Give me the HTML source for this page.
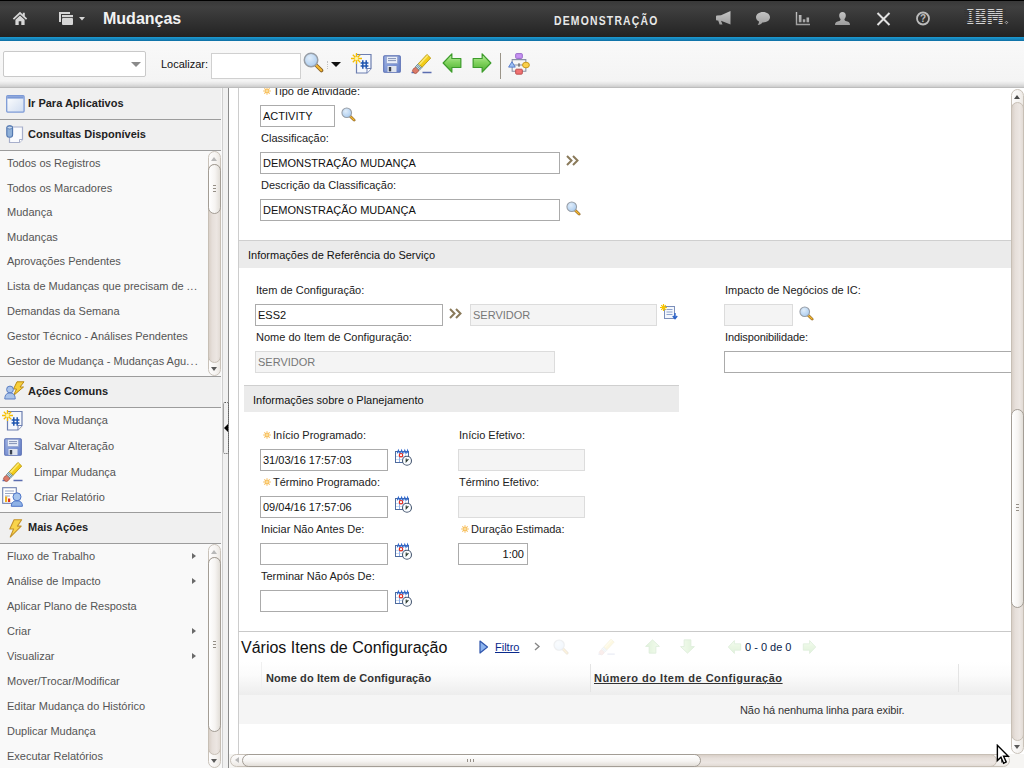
<!DOCTYPE html>
<html lang="pt-BR">
<head>
<meta charset="utf-8">
<title>Mudanças</title>
<style>
*{box-sizing:border-box;margin:0;padding:0}
html,body{width:1024px;height:768px;overflow:hidden;background:#fff;font-family:"Liberation Sans",Arial,sans-serif;font-size:11px;color:#222}
.abs{position:absolute}
#hdr{position:absolute;left:0;top:0;width:1024px;height:37px;background:linear-gradient(#000 0,#000 1px,#393939 1.5px,#404040 7px,#333 20px,#272727 33px,#222 37px);}
#blue{position:absolute;left:0;top:37px;width:1024px;height:4px;background:linear-gradient(#1c9ad0,#1583ba 60%,#0e6ea3)}
#tb{position:absolute;left:0;top:41px;width:1024px;height:47px;background:linear-gradient(#f9f9f9 0,#f4f4f4 40px,#e4e4e4 43px,#cbcbcb 46.3px,#999 47px)}
#title{position:absolute;left:103px;top:10px;font-size:16px;font-weight:bold;color:#f2f2f2;letter-spacing:0}
#demo{position:absolute;left:554px;top:13px;font-size:13px;font-weight:bold;color:#e8e8e8;letter-spacing:1.5px;transform:scaleX(.8);transform-origin:0 0}
#left{position:absolute;left:0;top:88px;width:222px;height:680px;background:#f9f9f9;overflow:hidden}
.sh{position:absolute;left:0;width:221px;background:#f0f0f0;border-top:1px solid #9c9c9c;border-bottom:1px solid #9c9c9c;font-weight:bold;font-size:11px;color:#222}
.sh span{position:absolute;left:28px;top:8px}
.li{position:absolute;left:7px;font-size:11px;color:#555;white-space:nowrap}
.ai{position:absolute;left:34px;font-size:11px;color:#555;white-space:nowrap}
.arr{position:absolute;left:192px;width:0;height:0;border-left:4.5px solid #6a6a6a;border-top:3.5px solid transparent;border-bottom:3.5px solid transparent}
.vsb{position:absolute;width:13px;background:linear-gradient(90deg,#d9d2c8,#efebe5 50%,#d9d2c8);border:1px solid #c5beb4;border-radius:6px}
.thumb{position:absolute;background:linear-gradient(90deg,#fff,#f6f4f2 55%,#e2ded8);border:1px solid #a39d95;border-radius:7px}
#main{overflow:hidden;position:absolute;left:229px;top:88px;width:795px;height:680px;background:#fff}
.lbl{position:absolute;font-size:11px;color:#222;white-space:nowrap}
.inp{position:absolute;height:22px;border:1px solid #ababab;background:#fff;font-size:11px;color:#111;line-height:20px;padding-left:2px;white-space:nowrap;overflow:hidden}
.ro{border-color:#dcdcdc;background:#f4f4f4;color:#777}
.sec{position:absolute;background:#ebebeb;border-top:1px solid #cfcfcf;font-size:11px;color:#111}
</style>
</head>
<body>
<div id="hdr"></div>
<div id="blue"></div>
<div id="title">Mudanças</div>
<div id="demo">DEMONSTRAÇÃO</div>
<svg class="abs" style="left:0;top:0" width="1024" height="37" viewBox="0 0 1024 37">
 <g fill="#d6d6d6">
  <!-- home -->
  <path d="M20 11.8 L12.8 18.6 L14 19.8 L20 14.2 L26 19.8 L27.2 18.6 L24.8 16.3 V12.8 H22.8 V14.4 Z"/><path d="M20 15.6 L15.4 19.8 V25 H18.7 V21.2 H21.3 V25 H24.6 V19.8 Z"/>
  <!-- windows -->
  <rect x="59" y="12" width="11" height="2"/>
  <rect x="59" y="14" width="2" height="8"/>
  <rect x="62" y="15" width="11" height="2.2"/>
  <rect x="62" y="18" width="11" height="7" rx="1"/>
  <path d="M79 17 H85 L82 20.5 Z"/>
 </g>
 <defs><linearGradient id="hg" x1="0" y1="11" x2="0" y2="26" gradientUnits="userSpaceOnUse"><stop offset="0" stop-color="#c6c6c6"/><stop offset="1" stop-color="#9a9a9a"/></linearGradient></defs>
 <g fill="url(#hg)">
  <!-- megaphone -->
  <path d="M730.5 11 V24.5 L721 20.8 L722.5 24.6 H719.6 L718.2 20.6 H717 Q716 20.6 716 19.6 V16.6 Q716 15.6 717 15.6 L721 15.3 Z"/>
  <!-- chat -->
  <path d="M763 12 C759 12 756 14.3 756 17.2 C756 19 757.2 20.6 759 21.5 C759 22.8 758.5 24 757.6 25 C759.8 24.8 761.5 23.8 762.4 22.4 C762.6 22.4 762.8 22.4 763 22.4 C767 22.4 770 20.1 770 17.2 C770 14.3 767 12 763 12 Z"/>
  <!-- chart -->
  <path d="M795.8 12 H797.2 V23.8 H810 V25.2 H795.8 Z"/>
  <rect x="798.8" y="15" width="2.7" height="7.3"/>
  <rect x="802.8" y="19.3" width="2.5" height="3"/>
  <rect x="806.5" y="17.5" width="2.6" height="4.8"/>
  <!-- person -->
  <path d="M842.5 12 C844.6 12 845.8 13.5 845.8 15.4 C845.8 17 845.2 18.2 844.4 19 C844.4 20.2 845 20.8 846.6 21.3 C849 22 850 22.8 850 25 H835 C835 22.8 836 22 838.4 21.3 C840 20.8 840.6 20.2 840.6 19 C839.8 18.2 839.2 17 839.2 15.4 C839.2 13.5 840.4 12 842.5 12 Z"/>
 </g>
 <!-- X -->
 <path d="M877.5 13 L889.5 25 M889.5 13 L877.5 25" stroke="#e2e2e2" stroke-width="2" fill="none"/>
 <!-- help -->
 <circle cx="923" cy="18.5" r="6" fill="none" stroke="#bcbcbc" stroke-width="1.8"/>
 <text x="923" y="22.3" font-family="Liberation Sans, sans-serif" font-size="10" font-weight="bold" fill="#bcbcbc" text-anchor="middle">?</text>
 <!-- IBM logo -->
 <g fill="#d2d2d2" font-family="Liberation Mono, monospace" font-weight="bold">
  <text y="24.6" font-size="27" stroke="#d2d2d2" stroke-width=".7"><tspan x="966.6" textLength="7.6" lengthAdjust="spacingAndGlyphs">I</tspan><tspan x="975" textLength="11" lengthAdjust="spacingAndGlyphs">B</tspan><tspan x="987" textLength="16.4" lengthAdjust="spacingAndGlyphs">M</tspan></text>
 </g>
 <g fill="#353535">
  <rect x="964" y="10" width="42" height="1"/><rect x="964" y="12" width="42" height="1"/><rect x="964" y="14" width="42" height="1"/><rect x="964" y="16" width="42" height="1"/><rect x="964" y="18" width="42" height="1"/><rect x="964" y="20" width="42" height="1"/><rect x="964" y="22" width="42" height="1"/><rect x="964" y="24" width="42" height="2" fill="#2d2d2d"/><rect x="964" y="6" width="42" height="3" fill="#3e3e3e"/>
 </g>
 <rect x="1005.6" y="21.6" width="1.8" height="1.8" fill="none" stroke="#d0d0d0" stroke-width=".7" transform="rotate(45 1006.5 22.5)"/>
</svg>
<svg width="0" height="0" style="position:absolute">
 <defs>
  <radialGradient id="lens" cx="40%" cy="35%" r="70%"><stop offset="0" stop-color="#e0edfa"/><stop offset="1" stop-color="#a9cbef"/></radialGradient>
  <linearGradient id="grn" x1="0" y1="0" x2="0" y2="1"><stop offset="0" stop-color="#c4eeae"/><stop offset=".45" stop-color="#84d460"/><stop offset="1" stop-color="#4cae2e"/></linearGradient>
  <linearGradient id="flop" x1="0" y1="0" x2="1" y2="1"><stop offset="0" stop-color="#9db2e4"/><stop offset="1" stop-color="#6580c8"/></linearGradient>
  <g id="mag">
   <path d="M10.2 10.2 L14.2 14.2" stroke="#8c6428" stroke-width="2.9" stroke-linecap="round"/>
   <path d="M10.2 10.2 L14.1 14.1" stroke="#f5b82e" stroke-width="1.5" stroke-linecap="round"/>
   <circle cx="6.2" cy="6.2" r="5.2" fill="url(#lens)" stroke="#989ea6" stroke-width="1.15"/>
  </g>
  <g id="cal">
   <rect x="1.5" y="3.5" width="13" height="11" fill="#fff" stroke="#4f6c9f" stroke-width="1"/>
   <path d="M2 8.5 H14 M2 11.5 H14 M5.5 4 V14 M8.5 4 V14 M11.5 4 V14" stroke="#c9dcf6" stroke-width="1"/>
   <path d="M5.5 7 V14" stroke="#8fb0ea" stroke-width="1"/>
   <path d="M3.2 5.4 L4.4 2.2 L5.6 5.4 M6.4 5.4 L7.6 2.2 L8.8 5.4 M9.6 5.4 L10.8 2.2 L12 5.4 M12.6 5.4 L13.6 2.4 L14.2 4.6" fill="none" stroke="#2d66cc" stroke-width="1.1"/>
   <circle cx="7" cy="7.2" r="1.7" fill="#fff" stroke="#e02a1e" stroke-width="1.2"/>
   <circle cx="13" cy="12.7" r="4.5" fill="#fbfdff" stroke="#4a5b74" stroke-width="1.1"/>
   <path d="M12.2 10.4 V13.6 L14.4 11.2" stroke="#2b3a2e" stroke-width="1.1" fill="none"/>
  </g>
  <g id="chev">
   <path d="M1 1 L5.5 5.5 L1 10 M7 1 L11.5 5.5 L7 10" fill="none" stroke="#8a7a5a" stroke-width="2"/>
  </g>
  <g id="newdoc">
   <path d="M5.5 1.5 H20 V15.5 L16 20 H5.5 Z" fill="#f5f8fd" stroke="#6d7fb0" stroke-width="1.2"/>
   <path d="M20 15.5 H16 V20" fill="#fff" stroke="#6d7fb0" stroke-width="1"/>
   <path d="M11.8 7.2 V15.8 M15.2 7.2 V15.8 M9.6 9.9 H17.4 M9.6 13.1 H17.4" stroke="#1f55b0" stroke-width="1.5"/>
   <path d="M5.5 0 V11 M0 5.5 H11 M1.8 1.8 L9.2 9.2 M9.2 1.8 L1.8 9.2" stroke="#f5bd00" stroke-width="1.3"/>
   <circle cx="5.5" cy="5.5" r="1.8" fill="#fff5a0"/>
  </g>
  <g id="save">
   <rect x=".7" y=".7" width="16.6" height="16.6" rx="1" fill="url(#flop)" stroke="#5b70b4" stroke-width="1.1"/>
   <rect x="3.5" y="1.5" width="11" height="7" fill="#e9eef8" stroke="#8b9bc6" stroke-width=".6"/>
   <path d="M5 3.6 H13 M5 5.6 H13" stroke="#8391b6" stroke-width="1"/>
   <rect x="4.5" y="11" width="9" height="6" fill="#dfe4ee"/>
   <rect x="5.8" y="12" width="2.4" height="4.4" fill="#39414f"/>
  </g>
  <g id="eraser">
   <path d="M.5 19.6 H3.6 M11.5 19.6 H20.5" stroke="#5b6db0" stroke-width="1.5"/>
   <g transform="rotate(-47 5 17)">
    <rect x="1.5" y="14.4" width="6" height="5.2" rx="2.2" fill="#dc7a68" stroke="#a6503f" stroke-width=".8"/>
    <rect x="7" y="14.4" width="4.2" height="5.2" fill="#e4edf0" stroke="#5f8088" stroke-width=".8"/>
    <path d="M8.4 14.6 V19.4 M9.8 14.6 V19.4" stroke="#2f6f86" stroke-width=".7"/>
    <rect x="11.2" y="14.4" width="12.6" height="5.2" fill="#f2cc18" stroke="#b5940c" stroke-width=".8"/>
    <rect x="11.4" y="14.9" width="12.2" height="1.7" fill="#fbe870"/>
   </g>
  </g>
  <g id="larr"><path d="M.8 10 L9.5 .8 V5.5 H18.5 V14.5 H9.5 V19.2 Z" fill="url(#grn)" stroke="#3c9c2a" stroke-width="1.2" stroke-linejoin="round"/></g>
  <g id="flow">
   <path d="M10.6 5 V6.4 M4 6.4 H17.2 V17.6 H4 Z M4 11.6 H17.2" fill="none" stroke="#8890a4" stroke-width="1"/>
   <rect x="7.4" y=".6" width="6.4" height="4.6" rx=".8" fill="#c792f2" stroke="#9466c6" stroke-width=".9"/>
   <path d="M3.8 8.4 L.6 13.6 H7 Z" fill="#9cc0f5" stroke="#5478c8" stroke-width=".9"/>
   <ellipse cx="17.3" cy="11.6" rx="3.3" ry="2.7" fill="#fbd04a" stroke="#c49418" stroke-width=".9"/>
   <rect x="7.4" y="15.6" width="6.4" height="4.8" rx=".8" fill="#f07272" stroke="#b84a4a" stroke-width=".9"/>
   <path d="M10.6 9.9 V13.3" stroke="#444" stroke-width="1"/>
  </g>
 </defs>
</svg>
<div id="tb">
 <div class="abs" style="left:3px;top:10px;width:143px;height:26px;background:#fff;border:1px solid #c9c9c9;border-radius:2px"></div>
 <div class="abs" style="left:131px;top:21px;width:0;height:0;border-top:5px solid #8a8a8a;border-left:5px solid transparent;border-right:5px solid transparent"></div>
 <div class="abs" style="left:161px;top:17px;font-size:11px;color:#111">Localizar:</div>
 <div class="abs" style="left:211px;top:12px;width:90px;height:26px;background:#fff;border:1px solid #d0d0d0"></div>
 <svg class="abs" style="left:303px;top:11.4px" width="21" height="21" viewBox="0 0 16.2 16.2"><use href="#mag"/></svg>
 <div class="abs" style="left:327px;top:20px;width:1px;height:8px;border-left:1px dotted #c4c4c4"></div>
 <div class="abs" style="left:331px;top:21px;width:0;height:0;border-top:5px solid #111;border-left:5px solid transparent;border-right:5px solid transparent"></div>
 <svg class="abs" style="left:351px;top:12px" width="21" height="21" viewBox="0 0 21 21"><use href="#newdoc"/></svg>
 <svg class="abs" style="left:383px;top:14px" width="18" height="18" viewBox="0 0 18 18"><use href="#save"/></svg>
 <svg class="abs" style="left:411px;top:12px" width="22" height="22" viewBox="0 0 22 22"><use href="#eraser"/></svg>
 <svg class="abs" style="left:442px;top:12px" width="20" height="20" viewBox="0 0 19.3 20"><use href="#larr"/></svg>
 <svg class="abs" style="left:472px;top:12px" width="20" height="20" viewBox="0 0 19.3 20"><use href="#larr" transform="translate(19.3 0) scale(-1 1)"/></svg>
 <div class="abs" style="left:500px;top:12px;width:1px;height:26px;background:#9a9488"></div>
 <svg class="abs" style="left:508px;top:12px" width="22" height="22" viewBox="0 0 21.2 21.2"><use href="#flow"/></svg>
</div>


<div id="left">
<div class="sh" style="top:-1px;height:33px"><svg class="abs" style="left:6px;top:7px" width="19" height="18" viewBox="0 0 19 18"><defs><linearGradient id="wg" x1="0" y1="0" x2="1" y2="1"><stop offset="0" stop-color="#fff"/><stop offset="1" stop-color="#cfdcf0"/></linearGradient></defs><rect x=".7" y=".7" width="17.4" height="16.4" rx="1" fill="url(#wg)" stroke="#7d9ad6" stroke-width="1.3"/><rect x="1.2" y="1.2" width="16.4" height="2.4" fill="#7d9ad6"/></svg><span style="top:9px">Ir Para Aplicativos</span></div>
<div class="sh" style="top:31px;height:32px"><svg class="abs" style="left:6px;top:5px" width="18" height="19" viewBox="0 0 18 19"><path d="M4.5 2 H16.5 V14.5 L13.5 17.5 H3.5 V13" fill="#fafbfe" stroke="#a7afcb" stroke-width="1.2"/><path d="M16.5 14.5 H13.5 V17.5" fill="#fff" stroke="#a7afcb" stroke-width="1"/><rect x=".8" y=".8" width="5.8" height="11.4" rx="2.4" fill="#8fb0d8" stroke="#4f74ae" stroke-width="1.1"/><ellipse cx="3.7" cy="2.6" rx="2.6" ry="1.4" fill="#c7d9ef" stroke="#4f74ae" stroke-width=".7"/></svg><span style="top:8px">Consultas Disponíveis</span></div>
<div class="sh" style="top:288px;height:32px"><svg class="abs" style="left:4px;top:4px" width="21" height="19" viewBox="0 0 21 19"><path d="M13 .8 H20 L16 6 H19.5 L9.5 14.5 L12.5 8 H9.5 Z" fill="#f8cf3a" stroke="#b98a14" stroke-width="1"/><circle cx="6" cy="8.5" r="3.4" fill="#a9c3ea" stroke="#5c7fc3" stroke-width="1"/><path d="M.8 18 C.8 13.5 3 12 6 12 C9 12 11.2 13.5 11.2 18 Z" fill="#a9c3ea" stroke="#5c7fc3" stroke-width="1"/></svg><span style="top:8px">Ações Comuns</span></div>
<div class="sh" style="top:424px;height:32px"><svg class="abs" style="left:8px;top:6px" width="15" height="19" viewBox="0 0 15 20"><path d="M6 .8 H14 L9.5 7.5 H13.5 L2 19 L5.5 10.5 H1.5 Z" fill="#f9d44a" stroke="#c4922a" stroke-width="1.1" stroke-linejoin="round"/></svg><span style="top:8px">Mais Ações</span></div>
<div class="li" style="top:69px">Todos os Registros</div>
<div class="li" style="top:94px">Todos os Marcadores</div>
<div class="li" style="top:118px">Mudança</div>
<div class="li" style="top:143px">Mudanças</div>
<div class="li" style="top:167px">Aprovações Pendentes</div>
<div class="li" style="top:192px">Lista de Mudanças que precisam de <span style="letter-spacing:.5px">...</span></div>
<div class="li" style="top:217px">Demandas da Semana</div>
<div class="li" style="top:242px">Gestor Técnico - Análises Pendentes</div>
<div class="li" style="top:267px">Gestor de Mudança - Mudanças Agu<span style="letter-spacing:1.2px">...</span></div>
<div class="ai" style="top:326px">Nova Mudança</div>
<div class="ai" style="top:352px">Salvar Alteração</div>
<div class="ai" style="top:378px">Limpar Mudança</div>
<div class="ai" style="top:403px">Criar Relatório</div>
<div class="li" style="top:462px">Fluxo de Trabalho</div>
<div class="arr" style="top:465px"></div>
<div class="li" style="top:487px">Análise de Impacto</div>
<div class="arr" style="top:490px"></div>
<div class="li" style="top:512px">Aplicar Plano de Resposta</div>
<div class="li" style="top:537px">Criar</div>
<div class="arr" style="top:540px"></div>
<div class="li" style="top:562px">Visualizar</div>
<div class="arr" style="top:565px"></div>
<div class="li" style="top:587px">Mover/Trocar/Modificar</div>
<div class="li" style="top:612px">Editar Mudança do Histórico</div>
<div class="li" style="top:637px">Duplicar Mudança</div>
<div class="li" style="top:662px">Executar Relatórios</div>
<svg class="abs" style="left:2px;top:322px" width="21" height="21" viewBox="0 0 21 21"><use href="#newdoc"/></svg>
<svg class="abs" style="left:4px;top:350px" width="18" height="18" viewBox="0 0 18 18"><use href="#save"/></svg>
<svg class="abs" style="left:2px;top:373px" width="22" height="22" viewBox="0 0 22 22"><use href="#eraser"/></svg>
<svg class="abs" style="left:2px;top:399px" width="21" height="20" viewBox="0 0 21 20"><rect x=".7" y=".7" width="13.6" height="15.6" fill="#fff" stroke="#6d7fb0" stroke-width="1.1"/><path d="M3 4 H12 M3 6.5 H12 M3 9 H8" stroke="#9aa7c4" stroke-width="1"/><rect x="3" y="9.5" width="2.2" height="5.5" fill="#f0b020"/><rect x="6" y="11.5" width="2.2" height="3.5" fill="#d9362b"/><path d="M9.3 19.3 C9.3 15.2 11.8 13.8 15 13.8 C18.2 13.8 20.4 15.2 20.4 19.3 Z" fill="#8fb2e6" stroke="#4d74c7" stroke-width="1"/><circle cx="15" cy="9.8" r="4" fill="#a5c4ee" stroke="#4d74c7" stroke-width="1"/></svg>
<div class="abs" style="left:208px;top:63px;width:13px;height:225px;background:linear-gradient(90deg,#fdfcfc,#f6f4f2 60%,#ece8e3);border:1px solid #c9c2b9;border-radius:7px"></div>
<div class="abs" style="left:208px;top:76px;width:13px;height:199px;background:linear-gradient(90deg,#d9d0c8,#e6dfda 30%,#ece6e2 70%,#e2dbd5);border:1px solid #c7bfb5;border-radius:7px"></div>
<div class="thumb" style="left:208px;top:76px;width:13px;height:50px"></div>
<div class="abs" style="left:211px;top:69px;border-bottom:4px solid #b8b8b8;border-left:3.5px solid transparent;border-right:3.5px solid transparent"></div>
<div class="abs" style="left:211px;top:279px;border-top:4px solid #5a5a5a;border-left:3.5px solid transparent;border-right:3.5px solid transparent"></div>
<div class="abs" style="left:213px;top:97px;width:3px;height:1px;background:#958f87"></div>
<div class="abs" style="left:213px;top:100px;width:3px;height:1px;background:#958f87"></div>
<div class="abs" style="left:213px;top:103px;width:3px;height:1px;background:#958f87"></div>
<div class="abs" style="left:208px;top:456px;width:13px;height:224px;background:linear-gradient(90deg,#fdfcfc,#f6f4f2 60%,#ece8e3);border:1px solid #c9c2b9;border-radius:7px"></div>
<div class="abs" style="left:208px;top:469px;width:13px;height:198px;background:linear-gradient(90deg,#d9d0c8,#e6dfda 30%,#ece6e2 70%,#e2dbd5);border:1px solid #c7bfb5;border-radius:7px"></div>
<div class="thumb" style="left:208px;top:469px;width:13px;height:175px"></div>
<div class="abs" style="left:211px;top:462px;border-bottom:4px solid #b8b8b8;border-left:3.5px solid transparent;border-right:3.5px solid transparent"></div>
<div class="abs" style="left:211px;top:671px;border-top:4px solid #5a5a5a;border-left:3.5px solid transparent;border-right:3.5px solid transparent"></div>
<div class="abs" style="left:213px;top:553px;width:3px;height:1px;background:#958f87"></div>
<div class="abs" style="left:213px;top:556px;width:3px;height:1px;background:#958f87"></div>
<div class="abs" style="left:213px;top:559px;width:3px;height:1px;background:#958f87"></div>
</div>
<div class="abs" style="left:222px;top:88px;width:7px;height:680px;background:#f1f1f1;border-left:1px solid #cfcfcf;border-right:1px solid #8c8c8c"></div>
<div class="abs" style="left:223px;top:402px;width:6px;height:52px;border:1px dotted #555;border-radius:2px"></div>
<div class="abs" style="left:224px;top:424px;width:0;height:0;border-right:4px solid #000;border-top:4.5px solid transparent;border-bottom:4.5px solid transparent"></div>

<div id="main">
<div class="abs" style="left:9px;top:0px;width:1px;height:666px;background:#cdcdcd"></div>
<svg class="abs" style="left:34px;top:-1px" width="8" height="8" viewBox="0 0 9 9"><path d="M4.5 .2 V8.8 M.2 4.5 H8.8 M1.5 1.5 L7.5 7.5 M7.5 1.5 L1.5 7.5" stroke="#f6b648" stroke-width="1.15" opacity=".9"/><circle cx="4.5" cy="4.5" r="2.3" fill="#f9c566" opacity=".8"/><circle cx="4.5" cy="4.5" r="1.1" fill="#fde6b0"/></svg><div class="lbl" style="left:44px;top:-3px">Tipo de Atividade:</div>
<div class="inp" style="left:31px;top:17px;width:75px">ACTIVITY</div>
<svg class="abs" style="left:112px;top:19px" width="15" height="15" viewBox="0 0 16.2 16.2"><use href="#mag"/></svg>
<div class="lbl" style="left:32px;top:44px">Classificação:</div>
<div class="inp" style="left:31px;top:64px;width:300px">DEMONSTRAÇÃO MUDANÇA</div>
<svg class="abs" style="left:337px;top:67px" width="13" height="11" viewBox="0 0 13 11"><use href="#chev"/></svg>
<div class="lbl" style="left:32px;top:91px">Descrição da Classificação:</div>
<div class="inp" style="left:31px;top:111px;width:300px">DEMONSTRAÇÃO MUDANÇA</div>
<svg class="abs" style="left:337px;top:113px" width="15" height="15" viewBox="0 0 16.2 16.2"><use href="#mag"/></svg>
<div class="sec" style="left:10px;top:152px;width:772px;height:28px"><span class="abs" style="left:9px;top:8px;white-space:nowrap">Informações de Referência do Serviço</span></div>
<div class="lbl" style="left:27px;top:196px">Item de Configuração:</div>
<div class="inp" style="left:26px;top:216px;width:188px">ESS2</div>
<svg class="abs" style="left:220px;top:220px" width="13" height="11" viewBox="0 0 13 11"><use href="#chev"/></svg>
<div class="inp ro" style="left:241px;top:216px;width:187px">SERVIDOR</div>
<svg class="abs" style="left:431px;top:216px" width="18" height="17" viewBox="0 0 18 17"><rect x="4.5" y="2.5" width="10" height="12" fill="#f3f7fd" stroke="#7c8fba" stroke-width="1"/><path d="M6.5 5.5 H12.5 M6.5 8 H12.5 M6.5 10.5 H12.5" stroke="#8fa3cc" stroke-width="1"/><path d="M3.5 0 V7 M0 3.5 H7 M1.2 1.2 L5.8 5.8 M5.8 1.2 L1.2 5.8" stroke="#f7c400" stroke-width="1.2"/><path d="M15 9 V14 M12.8 12 L15 14.6 L17.2 12" stroke="#2a62c9" stroke-width="1.4" fill="none"/></svg>
<div class="lbl" style="left:27px;top:243px">Nome do Item de Configuração:</div>
<div class="inp ro" style="left:26px;top:263px;width:300px">SERVIDOR</div>
<div class="lbl" style="left:496px;top:196px">Impacto de Negócios de IC:</div>
<div class="inp ro" style="left:495px;top:216px;width:69px"></div>
<svg class="abs" style="left:570px;top:218px" width="15" height="15" viewBox="0 0 16.2 16.2"><use href="#mag"/></svg>
<div class="lbl" style="left:496px;top:243px"><span style="letter-spacing:-.12px">Indisponibilidade:</span></div>
<div class="inp" style="left:495px;top:263px;width:291px"></div>
<div class="sec" style="left:15px;top:297px;width:435px;height:27px"><span class="abs" style="left:9px;top:8px;white-space:nowrap">Informações sobre o Planejamento</span></div>
<svg class="abs" style="left:34px;top:343px" width="8" height="8" viewBox="0 0 9 9"><path d="M4.5 .2 V8.8 M.2 4.5 H8.8 M1.5 1.5 L7.5 7.5 M7.5 1.5 L1.5 7.5" stroke="#f6b648" stroke-width="1.15" opacity=".9"/><circle cx="4.5" cy="4.5" r="2.3" fill="#f9c566" opacity=".8"/><circle cx="4.5" cy="4.5" r="1.1" fill="#fde6b0"/></svg><div class="lbl" style="left:44px;top:341px">Início Programado:</div>
<div class="inp" style="left:31px;top:361px;width:128px">31/03/16 17:57:03</div>
<svg class="abs" style="left:165px;top:360px" width="19" height="18" viewBox="0 0 19 18"><use href="#cal"/></svg>
<svg class="abs" style="left:34px;top:390px" width="8" height="8" viewBox="0 0 9 9"><path d="M4.5 .2 V8.8 M.2 4.5 H8.8 M1.5 1.5 L7.5 7.5 M7.5 1.5 L1.5 7.5" stroke="#f6b648" stroke-width="1.15" opacity=".9"/><circle cx="4.5" cy="4.5" r="2.3" fill="#f9c566" opacity=".8"/><circle cx="4.5" cy="4.5" r="1.1" fill="#fde6b0"/></svg><div class="lbl" style="left:44px;top:388px">Término Programado:</div>
<div class="inp" style="left:31px;top:408px;width:128px">09/04/16 17:57:06</div>
<svg class="abs" style="left:165px;top:407px" width="19" height="18" viewBox="0 0 19 18"><use href="#cal"/></svg>
<div class="lbl" style="left:32px;top:435px">Iniciar Não Antes De:</div>
<div class="inp" style="left:31px;top:455px;width:128px"></div>
<svg class="abs" style="left:165px;top:454px" width="19" height="18" viewBox="0 0 19 18"><use href="#cal"/></svg>
<div class="lbl" style="left:32px;top:482px">Terminar Não Após De:</div>
<div class="inp" style="left:31px;top:502px;width:128px"></div>
<svg class="abs" style="left:165px;top:501px" width="19" height="18" viewBox="0 0 19 18"><use href="#cal"/></svg>
<div class="lbl" style="left:230px;top:341px">Início Efetivo:</div>
<div class="inp ro" style="left:229px;top:361px;width:127px"></div>
<div class="lbl" style="left:230px;top:388px">Término Efetivo:</div>
<div class="inp ro" style="left:229px;top:408px;width:127px"></div>
<svg class="abs" style="left:232px;top:437px" width="8" height="8" viewBox="0 0 9 9"><path d="M4.5 .2 V8.8 M.2 4.5 H8.8 M1.5 1.5 L7.5 7.5 M7.5 1.5 L1.5 7.5" stroke="#f6b648" stroke-width="1.15" opacity=".9"/><circle cx="4.5" cy="4.5" r="2.3" fill="#f9c566" opacity=".8"/><circle cx="4.5" cy="4.5" r="1.1" fill="#fde6b0"/></svg><div class="lbl" style="left:242px;top:435px">Duração Estimada:</div>
<div class="inp" style="left:229px;top:455px;width:70px;text-align:right;padding-right:3px">1:00</div>
<div class="abs" style="left:9px;top:543px;width:773px;height:1px;background:#c9c9c9"></div>
<div class="abs" style="left:12px;top:551px;font-size:16px;white-space:nowrap;color:#111">Vários Itens de Configuração</div>
<svg class="abs" style="left:250px;top:552px" width="10" height="14" viewBox="0 0 10 14"><path d="M1 1 L8.5 7 L1 13 Z" fill="#8db4ee" stroke="#2f55ac" stroke-width="1.2" stroke-linejoin="round"/></svg>
<div class="abs" style="left:266px;top:553px;font-size:11px;white-space:nowrap;color:#0a2a8c;text-decoration:underline">Filtro</div>
<svg class="abs" style="left:305px;top:554px" width="7" height="9" viewBox="0 0 7 9"><path d="M1 1 L5 4.5 L1 8" fill="none" stroke="#888" stroke-width="1.4"/></svg>
<svg class="abs" style="left:324px;top:551px;opacity:0.16" width="16" height="16" viewBox="0 0 16.2 16.2"><use href="#mag"/></svg>
<svg class="abs" style="left:369px;top:550px;opacity:.12" width="18" height="18" viewBox="0 0 22 22"><use href="#eraser"/></svg>
<svg class="abs" style="left:416px;top:551px;opacity:.16" width="15" height="15" viewBox="0 0 20 19.3"><use href="#larr" transform="translate(20 0) rotate(90)"/></svg>
<svg class="abs" style="left:451px;top:551px;opacity:.16" width="15" height="15" viewBox="0 0 20 19.3"><use href="#larr" transform="translate(0 19.3) rotate(-90)"/></svg>
<svg class="abs" style="left:498px;top:552px;opacity:.16" width="15" height="14" viewBox="0 0 19.3 20"><use href="#larr"/></svg>
<div class="abs" style="left:516px;top:553px;font-size:11px;white-space:nowrap;color:#0b1c4a">0 - 0 de 0</div>
<svg class="abs" style="left:573px;top:552px;opacity:.16" width="15" height="14" viewBox="0 0 19.3 20"><use href="#larr" transform="translate(19.3 0) scale(-1 1)"/></svg>
<div class="abs" style="left:10px;top:574px;width:772px;height:33px;background:linear-gradient(#fff,#fbfbfb 40%,#ededed)"></div>
<div class="abs" style="left:37px;top:584px;font-size:11px;white-space:nowrap;font-weight:bold;color:#333;letter-spacing:.1px">Nome do Item de Configuração</div>
<div class="abs" style="left:365px;top:584px;font-size:11px;white-space:nowrap;font-weight:bold;color:#333;text-decoration:underline;letter-spacing:.5px">Número do Item de Configuração</div>
<div class="abs" style="left:32px;top:574px;width:1px;height:27px;background:#f0f0f0"></div>
<div class="abs" style="left:361px;top:576px;width:1px;height:28px;background:#e4e4e4"></div>
<div class="abs" style="left:729px;top:576px;width:1px;height:28px;background:#e4e4e4"></div>
<div class="abs" style="left:10px;top:607px;width:772px;height:29px;background:#f5f5f5"></div>
<div class="abs" style="left:511px;top:616px;font-size:11px;white-space:nowrap;color:#333;letter-spacing:-.09px">Não há nenhuma linha para exibir.</div>
<div class="abs" style="left:782px;top:1px;width:13px;height:665px;background:linear-gradient(90deg,#fdfcfc,#f6f4f2 60%,#ece8e3);border:1px solid #c9c2b9;border-radius:7px"></div>
<div class="abs" style="left:782px;top:14px;width:13px;height:639px;background:linear-gradient(90deg,#d9d0c8,#e6dfda 30%,#ece6e2 70%,#e2dbd5);border:1px solid #c7bfb5;border-radius:7px"></div>
<div class="thumb" style="left:782px;top:321px;width:13px;height:199px"></div>
<div class="abs" style="left:785px;top:7px;border-bottom:4px solid #4a4a4a;border-left:3.5px solid transparent;border-right:3.5px solid transparent"></div>
<div class="abs" style="left:785px;top:657px;border-top:4px solid #5a5a5a;border-left:3.5px solid transparent;border-right:3.5px solid transparent"></div>
<div class="abs" style="left:787px;top:416px;width:3px;height:1px;background:#958f87"></div>
<div class="abs" style="left:787px;top:419px;width:3px;height:1px;background:#958f87"></div>
<div class="abs" style="left:787px;top:422px;width:3px;height:1px;background:#958f87"></div>
<div class="abs" style="left:0px;top:666px;width:795px;height:14px;background:#f6f5f3"></div>
<div class="abs" style="left:1px;top:666px;width:780px;height:13px;background:linear-gradient(#fdfcfc,#f6f4f2 60%,#ece8e3);border:1px solid #c9c2b9;border-radius:7px"></div>
<div class="abs" style="left:14px;top:666px;width:754px;height:13px;background:linear-gradient(#d9d0c8,#e6dfda 30%,#ece6e2 70%,#e2dbd5);border:1px solid #c7bfb5;border-radius:7px"></div>
<div class="abs" style="left:13px;top:666px;width:459px;height:13px;background:linear-gradient(#fff,#f6f4f2 55%,#e2ded8);border:1px solid #a39d95;border-radius:7px"></div>
<div class="abs" style="left:6px;top:669px;border-right:4px solid #b8b8b8;border-top:3.5px solid transparent;border-bottom:3.5px solid transparent"></div>
<div class="abs" style="left:772px;top:669px;border-left:4px solid #5a5a5a;border-top:3.5px solid transparent;border-bottom:3.5px solid transparent"></div>
<div class="abs" style="left:238px;top:671px;width:1px;height:3px;background:#958f87"></div>
<div class="abs" style="left:241px;top:671px;width:1px;height:3px;background:#958f87"></div>
<div class="abs" style="left:244px;top:671px;width:1px;height:3px;background:#958f87"></div>
<svg class="abs" style="left:767px;top:656px" width="15" height="21" viewBox="0 0 17 24"><path d="M1.5 1.5 V19 L5.6 15.2 L8.6 22 L11.6 20.6 L8.6 14 H14 Z" fill="#fff" stroke="#000" stroke-width="1.6" stroke-linejoin="miter"/></svg>
</div>

</body>
</html>
